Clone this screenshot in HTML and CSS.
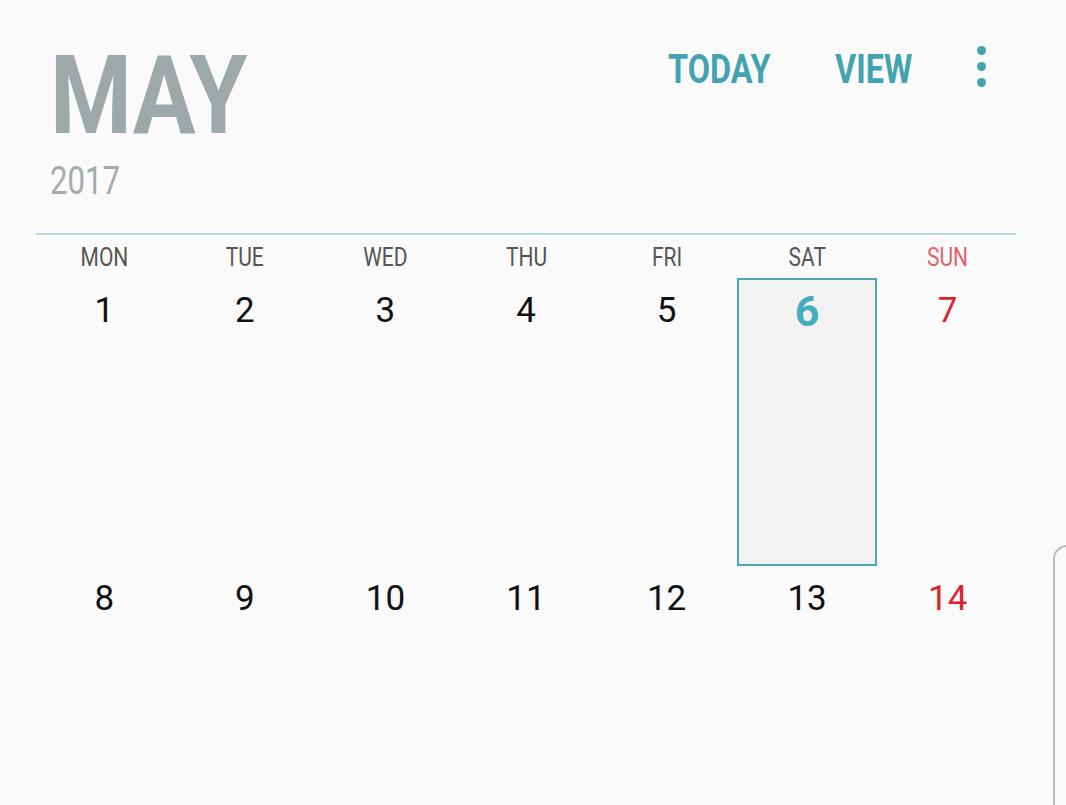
FILE: index.html
```html
<!DOCTYPE html>
<html>
<head>
<meta charset="utf-8">
<link rel="stylesheet" href="styles.css">
</head>
<body>
<div class="screen">
  <header class="header">
    <div class="title">
      <div class="month"><span class="cond">MAY</span></div>
      <div class="year"><span class="cond">2017</span></div>
    </div>
    <nav class="actions">
      <span class="action"><span class="cond">TODAY</span></span>
      <span class="action"><span class="cond">VIEW</span></span>
      <span class="more"><i></i><i></i><i></i></span>
    </nav>
  </header>
  <div class="divider"></div>
  <div class="weekdays">
    <div class="wd"><span class="cond">MON</span></div>
    <div class="wd"><span class="cond">TUE</span></div>
    <div class="wd"><span class="cond">WED</span></div>
    <div class="wd"><span class="cond">THU</span></div>
    <div class="wd"><span class="cond">FRI</span></div>
    <div class="wd"><span class="cond">SAT</span></div>
    <div class="wd sun"><span class="cond">SUN</span></div>
  </div>
  <div class="week">
    <div class="day">1</div>
    <div class="day">2</div>
    <div class="day">3</div>
    <div class="day">4</div>
    <div class="day">5</div>
    <div class="day selected">6</div>
    <div class="day sunday">7</div>
  </div>
  <div class="week">
    <div class="day">8</div>
    <div class="day">9</div>
    <div class="day">10</div>
    <div class="day">11</div>
    <div class="day">12</div>
    <div class="day">13</div>
    <div class="day sunday">14</div>
  </div>
  <div class="edge-panel"></div>
</div>
</body>
</html>
```
FILE: styles.css
```css
html, body {
  margin: 0;
  padding: 0;
  background: #fafafa;
}
.screen {
  position: relative;
  width: 1066px;
  height: 805px;
  overflow: hidden;
  font-family: Roboto, "Liberation Sans", sans-serif;
  background: #fafafa;
}
.cond {
  display: inline-block;
  transform: scaleX(0.84);
}
.header {
  display: flex;
  justify-content: space-between;
  align-items: flex-start;
  height: 233px;
  box-sizing: border-box;
  padding: 0 0 0 50px;
}
.title {
  padding-top: 41px;
}
.month {
  font-size: 110px;
  line-height: 110px;
  font-weight: 700;
  color: #9ea8aa;
}
.month .cond {
  transform-origin: 0 50%;
  transform: scaleX(0.85);
}
.year {
  margin-top: 10px;
  font-size: 39px;
  line-height: 40px;
  color: #a2abad;
}
.year .cond {
  transform-origin: 0 50%;
  transform: scaleX(0.8);
}
.actions {
  display: flex;
  align-items: center;
  padding-top: 50px;
  margin-right: 80px;
}
.action {
  font-size: 40px;
  line-height: 40px;
  font-weight: 700;
  color: #43a3b1;
  margin-left: 43px;
}
.action .cond {
  transform: scaleX(0.81);
}
.more {
  display: flex;
  flex-direction: column;
  gap: 7px;
  margin-left: 56px;
  margin-top: -8px;
}
.more i {
  display: block;
  width: 9px;
  height: 9px;
  border-radius: 50%;
  background: #43a3b1;
}
.divider {
  margin: 0 50px 0 36px;
  height: 2px;
  background: #b6dde2;
}
.weekdays,
.week {
  display: grid;
  grid-template-columns: repeat(7, 1fr);
  margin-left: 34px;
  width: 984px;
}
.weekdays {
  height: 43px;
}
.wd {
  text-align: center;
  font-size: 25px;
  line-height: 45px;
  color: #555555;
}
.wd.sun {
  color: #e0626a;
}
.week {
  height: 288px;
}
.day {
  box-sizing: border-box;
  text-align: center;
  font-size: 35px;
  line-height: 35px;
  padding-top: 15px;
  color: #111111;
}
.day.sunday {
  color: #d8262f;
}
.day.selected {
  border: 2px solid #4aa8b3;
  background: #f2f2f2;
  padding-top: 10px;
  font-size: 43px;
  line-height: 43px;
  color: #45aebd;
  font-weight: 700;
}
.edge-panel {
  position: absolute;
  left: 1053px;
  top: 545px;
  width: 40px;
  height: 300px;
  border-left: 2px solid #bdbdbd;
  border-top: 2px solid #bdbdbd;
  border-top-left-radius: 14px;
  box-sizing: border-box;
}
```
